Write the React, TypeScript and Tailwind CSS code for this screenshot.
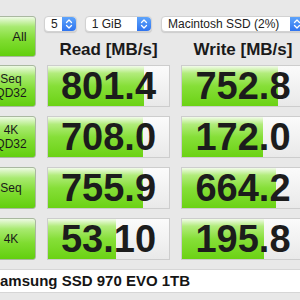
const rows = [
  { label: ["Seq", "QD32"], read: "801.4", readW: 96, write: "752.8", writeW: 96 },
  { label: ["4K", "QD32"], read: "708.0", readW: 95, write: "172.0", writeW: 81 },
  { label: ["Seq"], read: "755.9", readW: 95, write: "664.2", writeW: 94 },
  { label: ["4K"], read: "53.10", readW: 68, write: "195.8", writeW: 82 },
];

const greenBtn =
  "flex flex-col items-center justify-center rounded-[3px] border border-[#a9b8a0] bg-[linear-gradient(to_bottom,#eefae4_0%,#a8ea70_25%,#7fdc30_60%,#62cf0e_100%)] text-[#1a1a1a]";

const Stepper = () => (
  <div className="flex h-full w-[14px] items-center justify-center rounded-r-[4px] bg-[linear-gradient(to_bottom,#5ea4fb,#2f74ef)]">
    <svg width="8" height="12" viewBox="0 0 8 12" fill="none" stroke="white" strokeWidth="1.3" strokeLinecap="round" strokeLinejoin="round">
      <path d="M1.5 4.5 L4 2 L6.5 4.5" />
      <path d="M1.5 7.5 L4 10 L6.5 7.5" />
    </svg>
  </div>
);

const Select = ({ text, w }: { text: string; w: string }) => (
  <div className={`flex h-[16px] items-center justify-between rounded-[4px] border border-[#d2d2d2] bg-white shadow-[0_1px_1px_rgba(0,0,0,0.12)] ${w}`}>
    <span className="pl-[6px] text-[12px] leading-none text-[#222]">{text}</span>
    <Stepper />
  </div>
);

const Cell = ({ value, width }: { value: string; width: number }) => (
  <div className="relative flex h-full items-center justify-center overflow-hidden border border-[#cdcdcd] bg-[linear-gradient(to_bottom,#fbfbfb,#e9e9e9)]">
    <div
      className="absolute inset-y-0 left-0 bg-[linear-gradient(to_bottom,#f2fbea_0%,#b2ec7c_18%,#86df38_50%,#6bd214_100%)]"
      style={{ width }}
    />
    <span className="relative text-[38px] font-bold leading-none text-[#1c1c1c]">{value}</span>
  </div>
);

export default function App() {
  return (
    <div className="h-[300px] w-[300px] overflow-hidden bg-[#e8e8e8] font-['Liberation_Sans',Arial,sans-serif]">
      <div className="-ml-[14px] w-[319px] pt-[16px]">
        <div className="flex h-[41px] gap-x-[11px]">
          <div className={`${greenBtn} w-[50px] pl-[17px] text-[13px]`}>All</div>
          <div className="flex w-[258px] flex-col">
            <div className="-ml-[3px] flex gap-x-[8px]">
              <Select text="5" w="w-[33px]" />
              <Select text="1 GiB" w="w-[68px]" />
              <div className="ml-px">
                <Select text="Macintosh SSD (2%)" w="w-[144px]" />
              </div>
            </div>
            <div className="mt-[8px] grid grid-cols-[123px_124px] gap-x-[11px] text-[17px] font-bold leading-[20px] text-[#1a1a1a]">
              <div className="text-center">Read [MB/s]</div>
              <div className="text-center">Write [MB/s]</div>
            </div>
          </div>
        </div>
        <div className="mt-[8px] flex flex-col gap-y-[9px]">
          {rows.map((r) => (
            <div key={r.read} className="grid h-[42px] grid-cols-[50px_123px_124px] gap-x-[11px]">
              <div className={`${greenBtn} text-[12px] leading-[14px]`}>
                {r.label.map((l) => (
                  <span key={l}>{l}</span>
                ))}
              </div>
              <Cell value={r.read} width={r.readW} />
              <Cell value={r.write} width={r.writeW} />
            </div>
          ))}
        </div>
        <div className="mt-[9px] flex h-[24px] items-center border-y border-[#d6d6d6] bg-white pl-[4px] text-[15px] font-bold text-[#151515]">
          Samsung SSD 970 EVO 1TB
        </div>
      </div>
    </div>
  );
}
